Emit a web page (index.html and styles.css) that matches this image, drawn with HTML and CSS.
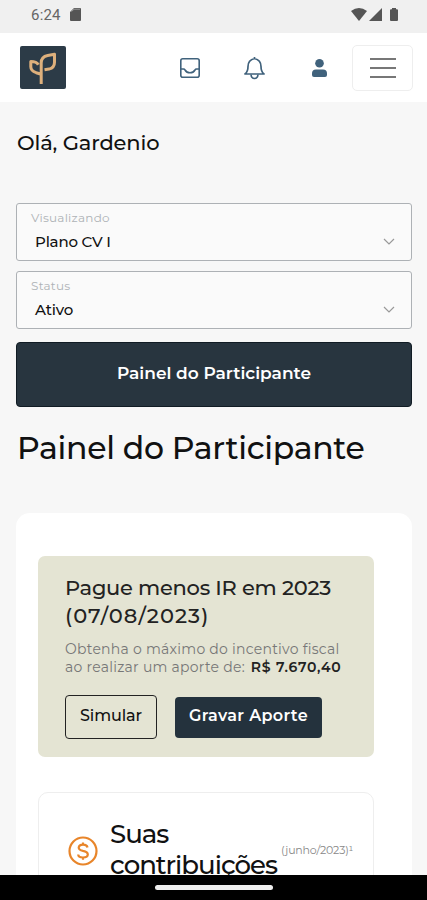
FILE: index.html
```html
<!DOCTYPE html>
<html lang="pt-BR">

<head>
    <meta charset="UTF-8">
    <meta name="viewport" content="width=device-width, initial-scale=1.0">
    <title>Painel do Participante</title>
    <link rel="stylesheet" href="styles.css">
</head>

<body>
    <div class="status-bar">
        <span class="clock">6:24</span>
        <svg class="sd" width="11" height="13" viewBox="0 0 11 13">
            <path d="M4 0h6q1 0 1 1v11q0 1-1 1H1q-1 0-1-1V4z" fill="#555" />
            <path d="M1.500 3.500L4 1.200h6" fill="none" stroke="#aaa" stroke-width=".8" />
        </svg>
        <div class="signals">
            <svg width="16" height="13" viewBox="0 0 16 13"><path d="M0 3q8-6 16 0L8 13z" fill="#555" /></svg>
            <svg width="13" height="13" viewBox="0 0 13 13"><path d="M13 0v13H0z" fill="#555" /></svg>
            <svg class="battery" width="8" height="13" viewBox="0 0 8 13"><path d="M2 0h4v1.300h1q1 0 1 1V12q0 1-1 1H1q-1 0-1-1V2.300q0-1 1-1h1z" fill="#555" /></svg>
        </div>
    </div>

    <header class="header">
        <svg class="logo" width="46" height="43" viewBox="0 0 46 43">
            <rect width="46" height="43" rx="2" fill="#2c3b47" />
            <path d="M21.200 38V17c0-4.500 2.200-6.800 6.500-7.500l6.800-1.200v8c0 4-2 6-5.500 6.800l-4.500.7M21.200 28.300l-5-1.600q-5.400-2-5.400-6v-5.200c4 0 6.300 1 7.500 3.200" fill="none" stroke="#deb07c" stroke-width="3" stroke-linejoin="round" />
        </svg>
        <nav class="actions">
            <svg width="20" height="20" viewBox="0 0 20 20" fill="none" stroke="#40627c" stroke-width="1.600">
                <rect x=".8" y=".8" width="18.400" height="18.400" rx="2" />
                <path d="M1 11h2.500q1 0 1.500 1 1.700 2.800 5 2.800t5-2.800q.5-1 1.500-1H19" />
            </svg>
            <svg class="bell" width="21" height="24" viewBox="0 0 21 24" fill="none" stroke="#40627c" stroke-width="1.700" stroke-linejoin="round">
                <path d="M10.500 1v1.500Q4 4 4 10.500c0 4-1 6-3 7.500h19c-2-1.500-3-3.500-3-7.500q0-6.500-6.500-8" />
                <path d="M7 18.500q.4 4 3.500 4t3.500-4" />
            </svg>
            <svg class="user" width="15" height="18" viewBox="0 0 15 18" fill="#40627c">
                <circle cx="7.500" cy="4.300" r="4.300" />
                <path d="M4 10.500h7q4 0 4 4v1.500q0 2-2 2H2q-2 0-2-2v-1.500q0-4 4-4z" />
            </svg>
        </nav>
        <button class="menu">
            <span></span>
            <span></span>
            <span></span>
        </button>
    </header>

    <main class="content">
        <h4 class="hello">Olá, Gardenio</h4>

        <div class="select">
            <label>Visualizando</label>
            <div class="value">
                <span>Plano CV I</span>
                <svg width="12" height="7" viewBox="0 0 12 7"><path d="M1 1l5 5 5-5" fill="none" stroke="#999" stroke-width="1.200" /></svg>
            </div>
        </div>
        <div class="select">
            <label>Status</label>
            <div class="value">
                <span>Ativo</span>
                <svg width="12" height="7" viewBox="0 0 12 7"><path d="M1 1l5 5 5-5" fill="none" stroke="#999" stroke-width="1.200" /></svg>
            </div>
        </div>
        <button class="btn-panel">Painel do Participante</button>

        <h1 class="title">Painel do Participante</h1>

        <section class="panel">
            <div class="notice">
                <h2>Pague menos IR em 2023<br><span class="date">(07/08/2023)</span></h2>
                <p>Obtenha o máximo do incentivo fiscal<br>ao realizar um aporte de: <strong>R$ 7.670,40</strong></p>
                <div class="buttons">
                    <button class="btn-outline">Simular</button>
                    <button class="btn-dark">Gravar Aporte</button>
                </div>
            </div>

            <div class="contrib">
                <svg class="coin" width="30" height="30" viewBox="0 0 30 30" fill="none" stroke="#e8852a">
                    <circle cx="15" cy="15" r="13.500" stroke-width="2.200" />
                    <path d="M19.500 11.500q-.5-2.800-4.500-2.800t-4.300 2.800q0 2.500 4.300 3.400 4.800.8 4.800 3.600 0 3-4.800 3t-4.800-3M15 6.500v2.200M15 21.500v2.200" stroke-width="2.200" />
                </svg>
                <h3>Suas<br>contribuições</h3>
                <small>(junho/2023)¹</small>
            </div>
        </section>
    </main>

    <div class="nav-bar"><span></span></div>
</body>

</html>
```

FILE: styles.css
```css
* {
    box-sizing: border-box;
}

body {
    display: flex;
    flex-direction: column;
    margin: 0;
    height: 900px;
    overflow: hidden;
    font-family: "Montserrat", "Inter", sans-serif;
    color: #111;
    background-color: #f7f7f7;
}

h1, h2, h3, h4, p {
    margin: 0;
    font-weight: 500;
}

button {
    font-family: inherit;
    padding: 0;
    white-space: nowrap;
}

svg {
    display: block;
    flex-shrink: 0;
}

.status-bar {
    display: flex;
    align-items: center;
    flex-shrink: 0;
    height: 33px;
    padding: 0 29px 4px 31px;
    background-color: #f0f0f0;
}

.clock {
    font-family: Roboto, sans-serif;
    font-size: 15px;
    letter-spacing: 0.2px;
    color: #666;
}

.sd {
    margin-left: 9px;
}

.signals {
    display: flex;
    gap: 2px;
    margin-left: auto;
}

.battery {
    margin-left: 6px;
}

.header {
    display: flex;
    align-items: center;
    flex-shrink: 0;
    height: 69px;
    padding: 0 14px 0 20px;
    background-color: #fff;
}

.actions {
    display: flex;
    align-items: center;
    margin-left: 114px;
}

.bell {
    margin-left: 44px;
}

.user {
    margin-left: 47px;
}

.menu {
    display: flex;
    flex-direction: column;
    align-items: center;
    justify-content: center;
    gap: 7px;
    margin-left: auto;
    width: 61px;
    height: 46px;
    border: 1px solid #eee;
    border-radius: 5px;
    background-color: #fff;
}

.menu span {
    width: 26px;
    height: 2px;
    background-color: #777;
}

.content {
    flex: 1;
    min-height: 0;
    overflow: hidden;
    padding: 0 15px 0 16px;
}

.hello {
    margin: 27px 0 46px 1px;
    font-size: 21px;
    line-height: 28px;
    letter-spacing: -0.15px;
}

.select {
    height: 58px;
    margin-bottom: 10px;
    padding: 6px 16px 0 14px;
    border: 1px solid #adb1b5;
    border-radius: 3px;
    background-color: #fafafa;
}

.select label {
    display: block;
    font-size: 12px;
    line-height: 15px;
    letter-spacing: 0.25px;
    color: #aeb2b6;
}

.value {
    display: flex;
    align-items: center;
    justify-content: space-between;
    height: 32px;
    padding-left: 4px;
    font-size: 15px;
    font-weight: 500;
    letter-spacing: -0.2px;
}

.btn-panel {
    display: block;
    width: 100%;
    height: 65px;
    margin-top: 13px;
    padding-bottom: 3px;
    border: 1px solid #111c24;
    border-radius: 4px;
    background-color: #28353f;
    color: #fff;
    font-size: 17px;
    font-weight: 600;
}

.title {
    margin: 21px 0 44px 1px;
    font-size: 31.5px;
    line-height: 41px;
    letter-spacing: -0.3px;
    white-space: nowrap;
}

.panel {
    height: 500px;
    padding: 43px 22px 0;
    border-radius: 14px;
    background-color: #fff;
}

.notice {
    width: 336px;
    height: 201px;
    padding: 18px 0 0 27px;
    border-radius: 7px;
    background-color: #e4e4d3;
    white-space: nowrap;
}

.notice h2 {
    font-size: 21px;
    line-height: 28px;
    letter-spacing: -0.26px;
    color: #222;
}

.notice .date {
    letter-spacing: 1.05px;
}

.notice p {
    margin-top: 10px;
    font-size: 14px;
    font-weight: 400;
    line-height: 18px;
    letter-spacing: 0.25px;
    color: #777;
}

.notice strong {
    margin-left: 2px;
    font-weight: 600;
    letter-spacing: 0.75px;
    color: #222;
}

.buttons {
    display: flex;
    align-items: center;
    gap: 18px;
    margin-top: 19px;
}

.btn-outline {
    width: 92px;
    height: 44px;
    padding-bottom: 3px;
    border: 1px solid #222;
    border-radius: 4px;
    background-color: transparent;
    color: #111;
    font-size: 16px;
    font-weight: 500;
    letter-spacing: -0.1px;
}

.btn-dark {
    width: 147px;
    height: 41px;
    padding-bottom: 3px;
    border: 0;
    border-radius: 4px;
    background-color: #24323d;
    color: #fff;
    font-size: 16px;
    font-weight: 600;
    letter-spacing: 0.35px;
}

.contrib {
    display: flex;
    width: 336px;
    height: 200px;
    margin-top: 35px;
    padding: 26px 0 0 29px;
    border: 1px solid #eee;
    border-radius: 10px;
}

.coin {
    margin-top: 17px;
}

.contrib h3 {
    width: 168px;
    margin-left: 12px;
    font-size: 26px;
    line-height: 31px;
    letter-spacing: -1px;
}

.contrib small {
    margin: 24px 0 0 3px;
    font-size: 11px;
    line-height: 14px;
    letter-spacing: -0.2px;
    color: #888;
}

.nav-bar {
    display: flex;
    align-items: center;
    justify-content: center;
    flex-shrink: 0;
    height: 25px;
    background-color: #000;
}

.nav-bar span {
    width: 118px;
    height: 5px;
    border-radius: 3px;
    background-color: #eee;
}
```
